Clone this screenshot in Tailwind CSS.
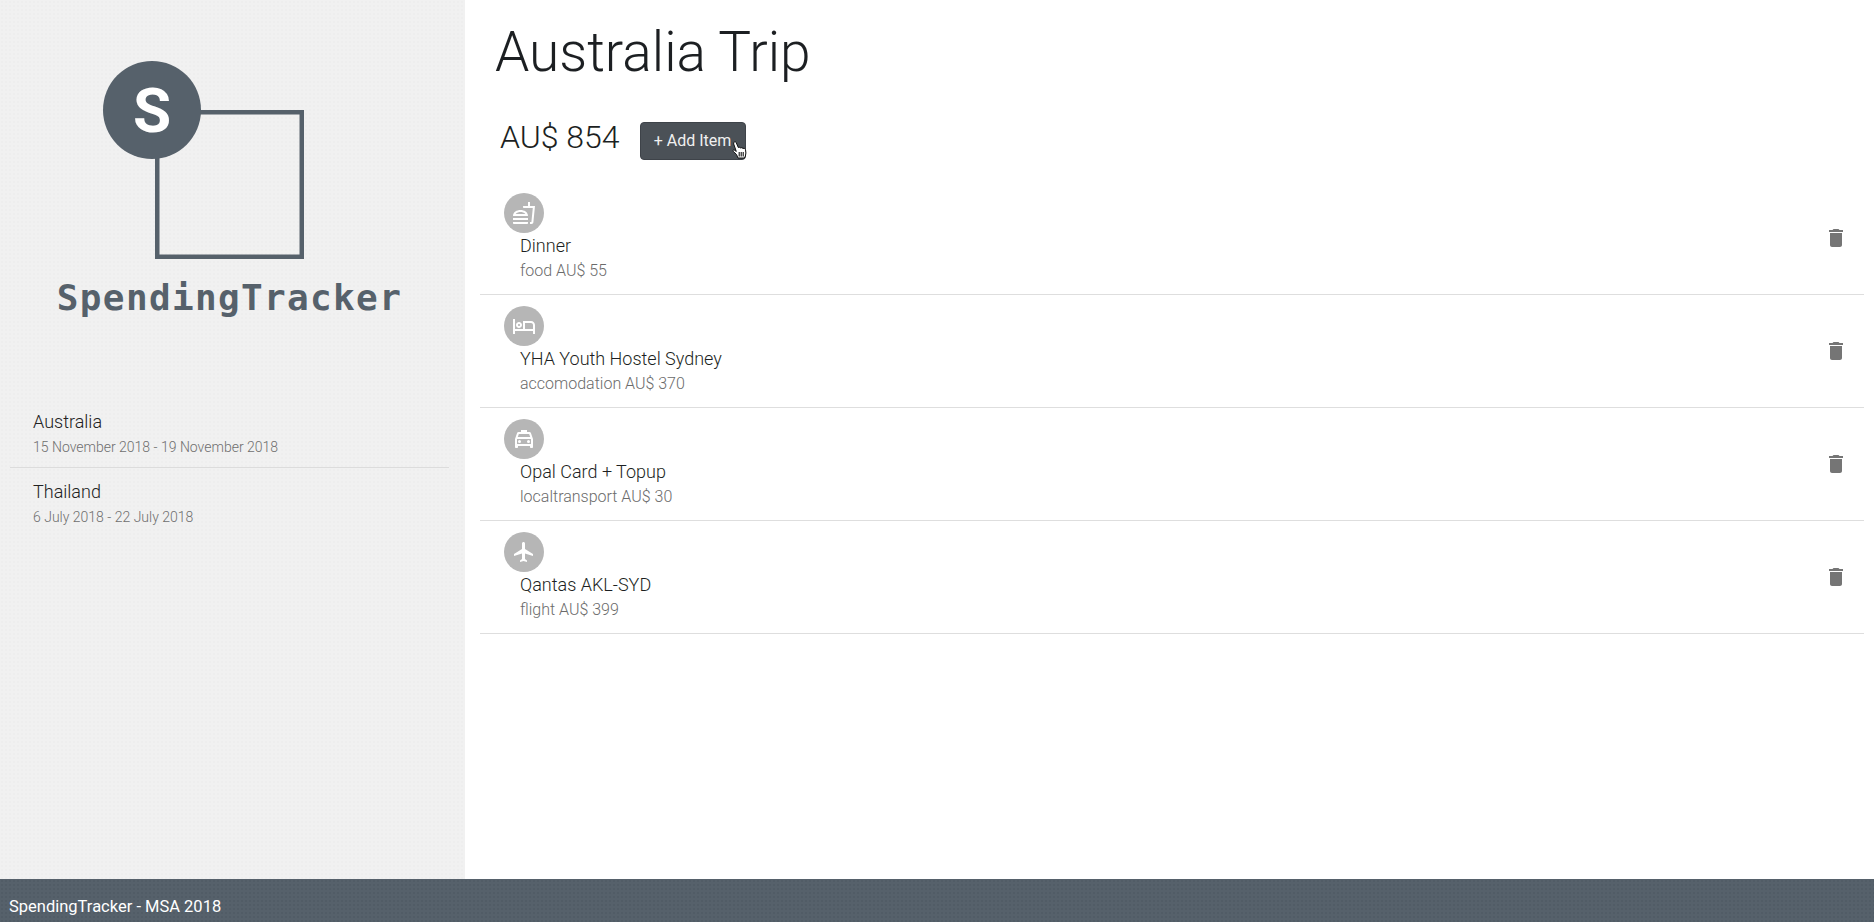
<!DOCTYPE html>
<html lang="en">

<head>
    <meta charset="UTF-8">
    <meta name="viewport" content="width=device-width, initial-scale=1.0">
    <title>SpendingTracker</title>
    <script src="https://cdn.jsdelivr.net/npm/@tailwindcss/browser@4"></script>
</head>

<body>
    <div class="flex flex-col w-full h-screen font-['Roboto',sans-serif] bg-white overflow-hidden">
        <div class="flex flex-1 min-h-0">
            <!-- sidebar -->
            <aside class="w-[465px] shrink-0 bg-[#f0f0f0] bg-[radial-gradient(circle,#eeeeee_1px,#f1f1f1_1px)] bg-[length:4px_4px] flex flex-col">
                <div class="pt-[61px] flex flex-col">
                    <svg class="w-[201px] h-[198px] ml-[103px]" viewBox="0 0 201 198">
                        <rect x="54.25" y="51.25" width="144.5" height="144.5" fill="none" stroke="#56616b" stroke-width="4.5" />
                        <circle cx="49" cy="49" r="49" fill="#56616b" />
                        <text x="49" y="71" text-anchor="middle" font-family="Roboto" font-weight="700" font-size="62" fill="#ffffff">S</text>
                    </svg>
                    <div class="mt-[17px] pr-[6px] text-center font-['DejaVu_Sans_Mono',monospace] font-bold text-[36px] leading-[44px] tracking-[1.35px] text-[#56616b]">SpendingTracker</div>
                </div>
                <ul class="mt-[78px] mx-[10px] w-[439px]">
                    <li class="h-[70px] pl-[23px] pt-[11px] border-b border-[#dcdcdc]">
                        <p class="text-[18px] leading-[26px] font-light text-[#222]">Australia</p>
                        <p class="mt-[2px] text-[14px] leading-[20px] font-light text-[#6f6f6f]">15 November 2018 - 19 November 2018</p>
                    </li>
                    <li class="h-[70px] pl-[23px] pt-[11px]">
                        <p class="text-[18px] leading-[26px] font-light text-[#222]">Thailand</p>
                        <p class="mt-[2px] text-[14px] leading-[20px] font-light text-[#6f6f6f]">6 July 2018 - 22 July 2018</p>
                    </li>
                </ul>
            </aside>

            <!-- trip detail -->
            <main class="flex-1 min-w-0 pl-[15px] pr-[10px]">
                <h1 class="pl-[15px] pt-[19px] text-[55px] leading-[67px] font-light text-[#1c1f22]">Australia Trip</h1>
                <div class="flex items-center mt-[36px] pl-[20px] h-[38px]">
                    <span class="text-[32px] leading-[38px] font-light text-[#1c1f22] -mt-[8px]">AU$ 854</span>
                    <button class="relative ml-[20px] w-[106px] h-[38px] rounded-[4px] bg-[#4b5157] border border-[#3e4349] text-[16px] text-[#f0f0f0]">+ Add Item
                        <svg class="absolute left-[91px] top-[18px] w-[15px] h-[18px]" viewBox="0 0 15 18">
                            <path d="M2.2 1c.8-.6 1.7-.2 2 .6L6.3 6.5l1.1-.2 1.2.6 1.2-.2 1.2.7 1.2-.1 1.3 1.3.4 3.4-.5 3-1 2H6L4.5 13.5 1.2 10.4c-.7-.8.2-1.8 1.1-1.3l2 1.3L1.7 3c-.2-.8 0-1.6.5-2z" fill="#ffffff" stroke="#111111" stroke-width="1" />
                            <path d="M7.2 11v4.5M9.2 11v4.5M11.2 11v4.5" stroke="#111111" stroke-width="1.1" />
                        </svg>
                    </button>
                </div>

                <ul class="mt-[22px]">
                    <li class="flex items-center h-[113px] border-b border-[#dedede]">
                        <div class="flex-1 pl-[24px]">
                            <div class="w-[40px] h-[40px] rounded-full bg-[#b6b6b6] flex items-center justify-center text-white">
                                <svg class="w-[24px] h-[24px]" viewBox="0 0 24 24" fill="currentColor"><path d="M1 21.98c0 .56.45 1.01 1.01 1.01H15c.56 0 1.01-.45 1.01-1.01V21H1v.98zM8.5 8.99C4.75 8.99 1 11 1 15h15c0-4-3.75-6.01-7.5-6.01zM3.62 13c1.11-1.55 3.47-2.01 4.88-2.01s3.77.46 4.88 2.01H3.62zM1 17h15v2H1zM18 5V1h-2v4h-5l.23 2h9.56l-1.4 14H18v2h1.72c.84 0 1.53-.65 1.63-1.47L23 5h-5z" /></svg>
                            </div>
                            <p class="pl-[16px] mt-[1px] text-[18px] leading-[24px] font-light text-[#1c1f22]">Dinner</p>
                            <p class="pl-[16px] mt-[1px] text-[16px] leading-[24px] font-light text-[#6b6b6b]">food AU$ 55</p>
                        </div>
                        <svg class="w-[24px] h-[24px] mr-[16px] text-[#757575]" viewBox="0 0 24 24" fill="currentColor"><path d="M6 19c0 1.1.9 2 2 2h8c1.1 0 2-.9 2-2V7H6v12zM19 4h-3.5l-1-1h-5l-1 1H5v2h14V4z" /></svg>
                    </li>
                    <li class="flex items-center h-[113px] border-b border-[#dedede]">
                        <div class="flex-1 pl-[24px]">
                            <div class="w-[40px] h-[40px] rounded-full bg-[#b6b6b6] flex items-center justify-center text-white">
                                <svg class="w-[24px] h-[24px]" viewBox="0 0 24 24" fill="currentColor"><path d="M7 14c1.66 0 3-1.34 3-3S8.66 8 7 8s-3 1.34-3 3 1.34 3 3 3zm0-4c.55 0 1 .45 1 1s-.45 1-1 1-1-.45-1-1 .45-1 1-1zm12-3h-8v8H3V5H1v15h2v-3h18v3h2v-9c0-2.21-1.79-4-4-4zm2 8h-8V9h6c1.1 0 2 .9 2 2v4z" /></svg>
                            </div>
                            <p class="pl-[16px] mt-[1px] text-[18px] leading-[24px] font-light text-[#1c1f22]">YHA Youth Hostel Sydney</p>
                            <p class="pl-[16px] mt-[1px] text-[16px] leading-[24px] font-light text-[#6b6b6b]">accomodation AU$ 370</p>
                        </div>
                        <svg class="w-[24px] h-[24px] mr-[16px] text-[#757575]" viewBox="0 0 24 24" fill="currentColor"><path d="M6 19c0 1.1.9 2 2 2h8c1.1 0 2-.9 2-2V7H6v12zM19 4h-3.5l-1-1h-5l-1 1H5v2h14V4z" /></svg>
                    </li>
                    <li class="flex items-center h-[113px] border-b border-[#dedede]">
                        <div class="flex-1 pl-[24px]">
                            <div class="w-[40px] h-[40px] rounded-full bg-[#b6b6b6] flex items-center justify-center text-white">
                                <svg class="w-[24px] h-[24px]" viewBox="0 0 24 24" fill="currentColor"><path d="M18.92 6.01C18.72 5.42 18.16 5 17.5 5H15V3H9v2H6.5c-.66 0-1.21.42-1.42 1.01L3 12v8c0 .55.45 1 1 1h1c.55 0 1-.45 1-1v-1h12v1c0 .55.45 1 1 1h1c.55 0 1-.45 1-1v-8l-2.08-5.99zM6.85 7h10.29l1.08 3.11H5.77L6.85 7zM19 17H5v-5h14v5z" /><circle cx="7.5" cy="14.5" r="1.5" /><circle cx="16.5" cy="14.5" r="1.5" /></svg>
                            </div>
                            <p class="pl-[16px] mt-[1px] text-[18px] leading-[24px] font-light text-[#1c1f22]">Opal Card + Topup</p>
                            <p class="pl-[16px] mt-[1px] text-[16px] leading-[24px] font-light text-[#6b6b6b]">localtransport AU$ 30</p>
                        </div>
                        <svg class="w-[24px] h-[24px] mr-[16px] text-[#757575]" viewBox="0 0 24 24" fill="currentColor"><path d="M6 19c0 1.1.9 2 2 2h8c1.1 0 2-.9 2-2V7H6v12zM19 4h-3.5l-1-1h-5l-1 1H5v2h14V4z" /></svg>
                    </li>
                    <li class="flex items-center h-[113px] border-b border-[#dedede]">
                        <div class="flex-1 pl-[24px]">
                            <div class="w-[40px] h-[40px] rounded-full bg-[#b6b6b6] flex items-center justify-center text-white">
                                <svg class="w-[24px] h-[24px]" viewBox="0 0 24 24" fill="currentColor"><path d="M21 16v-2l-8-5V3.5c0-.83-.67-1.5-1.5-1.5S10 2.67 10 3.5V9l-8 5v2l8-2.5V19l-2 1.5V22l3.5-1 3.5 1v-1.5L13 19v-5.5l8 2.5z" /></svg>
                            </div>
                            <p class="pl-[16px] mt-[1px] text-[18px] leading-[24px] font-light text-[#1c1f22]">Qantas AKL-SYD</p>
                            <p class="pl-[16px] mt-[1px] text-[16px] leading-[24px] font-light text-[#6b6b6b]">flight AU$ 399</p>
                        </div>
                        <svg class="w-[24px] h-[24px] mr-[16px] text-[#757575]" viewBox="0 0 24 24" fill="currentColor"><path d="M6 19c0 1.1.9 2 2 2h8c1.1 0 2-.9 2-2V7H6v12zM19 4h-3.5l-1-1h-5l-1 1H5v2h14V4z" /></svg>
                    </li>
                </ul>
            </main>
        </div>

        <footer class="h-[43px] shrink-0 bg-[#545f69] bg-[radial-gradient(circle,#515c66_1px,#56616b_1px)] bg-[length:4px_4px] pl-[9px] pt-[16px] text-[16.5px] leading-[24px] text-white">SpendingTracker - MSA 2018</footer>
    </div>
</body>

</html>
